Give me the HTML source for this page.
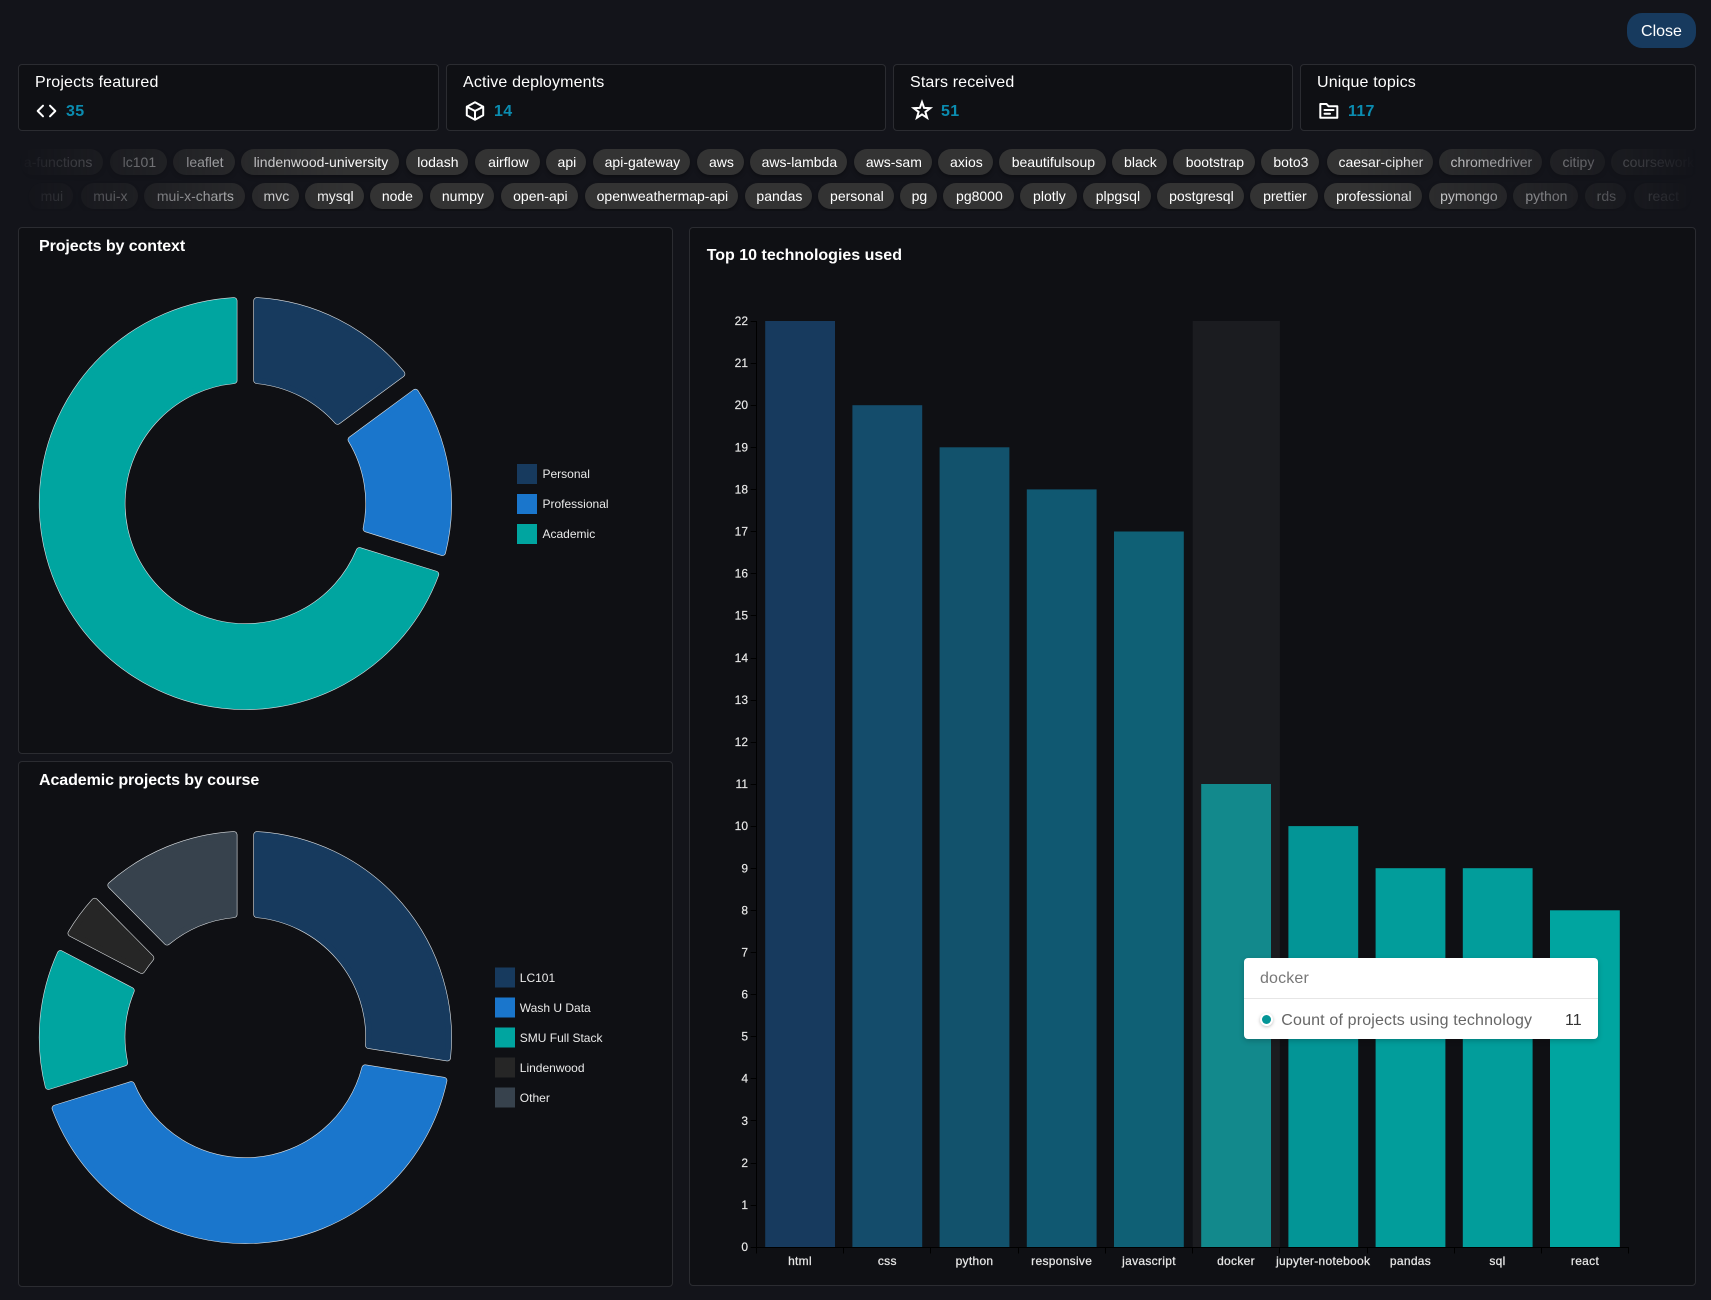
<!DOCTYPE html>
<html lang="en"><head><meta charset="utf-8"><title>Projects dashboard</title>
<style>
html,body{margin:0;padding:0;background:#13141a;}
body{width:1711px;height:1300px;position:relative;overflow:hidden;font-family:"Liberation Sans",sans-serif;color:#fff;}
.a{position:absolute;}
.card{position:absolute;box-sizing:border-box;background:#0f1014;border:1px solid #2b2c31;border-radius:4px;}
.t{position:absolute;font-size:16px;line-height:20px;color:#fff;white-space:nowrap;letter-spacing:.15px;}
.v{position:absolute;top:102px;font-size:16px;line-height:20px;font-weight:700;color:#0b8cb0;letter-spacing:.3px;}
.pt{position:absolute;font-size:16px;line-height:20px;font-weight:700;color:#fff;white-space:nowrap;}
#chips{position:absolute;left:0;top:149px;width:1711px;height:62px;overflow:hidden;
-webkit-mask-image:linear-gradient(to right,transparent 18px,#000 353px,#000 1358px,transparent 1696px);
mask-image:linear-gradient(to right,transparent 18px,#000 353px,#000 1358px,transparent 1696px);}
#chips span{position:absolute;height:26px;line-height:26px;border-radius:13px;background:#333;color:#fff;font-size:14px;text-align:center;white-space:nowrap;overflow:hidden;box-shadow:0 2px 4px rgba(0,0,0,.35);margin-left:.4px;padding-left:1px;}
.r1{top:0}.r2{top:34px}
svg text{font-family:"Liberation Sans",sans-serif;}
</style></head><body>

<div class="a" style="left:1627px;top:12.5px;width:69px;height:35.5px;background:#173a5e;border-radius:15px;text-align:center;line-height:37px;font-size:16px;color:#fff;">Close</div>

<div class="card" style="left:18px;top:64px;width:421px;height:67px;"></div>
<div class="card" style="left:446px;top:64px;width:440px;height:67px;"></div>
<div class="card" style="left:893px;top:64px;width:400px;height:67px;"></div>
<div class="card" style="left:1300px;top:64px;width:396px;height:67px;"></div>
<div class="t" style="left:35px;top:73px;">Projects featured</div>
<div class="t" style="left:463px;top:73px;">Active deployments</div>
<div class="t" style="left:910px;top:73px;">Stars received</div>
<div class="t" style="left:1317px;top:73px;">Unique topics</div>
<div class="v" style="left:66px;">35</div>
<div class="v" style="left:494px;">14</div>
<div class="v" style="left:941px;">51</div>
<div class="v" style="left:1348px;">117</div>

<div id="chips">
<span class="r1" style="left:20px;width:83px;text-align:right;padding-right:11px;box-sizing:border-box;">a-functions</span>
<span class="r1" style="left:110px;width:56px;">lc101</span>
<span class="r1" style="left:173px;width:61px;">leaflet</span>
<span class="r1" style="left:241px;width:157px;">lindenwood-university</span>
<span class="r1" style="left:406px;width:61px;">lodash</span>
<span class="r1" style="left:475px;width:64px;">airflow</span>
<span class="r1" style="left:546px;width:39px;">api</span>
<span class="r1" style="left:593px;width:96px;">api-gateway</span>
<span class="r1" style="left:697px;width:46px;">aws</span>
<span class="r1" style="left:750px;width:96px;">aws-lambda</span>
<span class="r1" style="left:854px;width:77px;">aws-sam</span>
<span class="r1" style="left:938px;width:54px;">axios</span>
<span class="r1" style="left:999px;width:106px;">beautifulsoup</span>
<span class="r1" style="left:1112px;width:54px;">black</span>
<span class="r1" style="left:1173px;width:81px;">bootstrap</span>
<span class="r1" style="left:1261px;width:57px;">boto3</span>
<span class="r1" style="left:1327px;width:105px;">caesar-cipher</span>
<span class="r1" style="left:1439px;width:102px;">chromedriver</span>
<span class="r1" style="left:1550px;width:54px;">citipy</span>
<span class="r1" style="left:1611px;width:92px;">coursework</span>
<span class="r2" style="left:29px;width:43px;">mui</span>
<span class="r2" style="left:81px;width:56px;">mui-x</span>
<span class="r2" style="left:144px;width:100px;">mui-x-charts</span>
<span class="r2" style="left:252px;width:46px;">mvc</span>
<span class="r2" style="left:305px;width:58px;">mysql</span>
<span class="r2" style="left:370px;width:52px;">node</span>
<span class="r2" style="left:430px;width:63px;">numpy</span>
<span class="r2" style="left:501px;width:76px;">open-api</span>
<span class="r2" style="left:585px;width:152px;">openweathermap-api</span>
<span class="r2" style="left:745px;width:66px;">pandas</span>
<span class="r2" style="left:818px;width:75px;">personal</span>
<span class="r2" style="left:900px;width:36px;">pg</span>
<span class="r2" style="left:943px;width:70px;">pg8000</span>
<span class="r2" style="left:1020px;width:56px;">plotly</span>
<span class="r2" style="left:1083px;width:67px;">plpgsql</span>
<span class="r2" style="left:1157px;width:86px;">postgresql</span>
<span class="r2" style="left:1250px;width:67px;">prettier</span>
<span class="r2" style="left:1324px;width:97px;">professional</span>
<span class="r2" style="left:1429px;width:77px;">pymongo</span>
<span class="r2" style="left:1513px;width:64px;">python</span>
<span class="r2" style="left:1585px;width:40px;">rds</span>
<span class="r2" style="left:1634px;width:56px;">react</span>
</div>

<div class="card" style="left:18px;top:227px;width:655px;height:527px;"></div>
<div class="card" style="left:18px;top:761px;width:655px;height:526px;"></div>
<div class="card" style="left:689px;top:227px;width:1007px;height:1059px;"></div>
<div class="pt" style="left:39px;top:237px;letter-spacing:-.08px;">Projects by context</div>
<div class="pt" style="left:39px;top:771px;letter-spacing:-.08px;">Academic projects by course</div>
<div class="pt" style="left:706.7px;top:246px;">Top 10 technologies used</div>

<svg class="a" style="left:0;top:0" width="1711" height="1300" viewBox="0 0 1711 1300" xmlns="http://www.w3.org/2000/svg">
<!-- stat icons -->
<g fill="none" stroke="#fff" stroke-width="2" stroke-linecap="round" stroke-linejoin="round">
<path d="M43 105.7L37.7 111L43 116.3M50 105.7L55.3 111L50 116.3"/>
<path d="M475 102.2L483.2 106.7V115.3L475 119.8L466.8 115.3V106.7ZM466.8 106.7L475 111L483.2 106.7M475 111V119.8"/>
<path d="M1320.3 104H1326.5L1328.5 106.2H1337.3V117.7H1320.3ZM1324.5 110H1333.5M1324.5 113.8H1330"/>
</g>
<path fill="none" stroke="#fff" stroke-width="2" stroke-linejoin="miter" d="M922 102.1L924.1 107.9L930.3 108.1L925.4 111.9L927.1 117.8L922 114.4L916.9 117.8L918.6 111.9L913.7 108.1L919.9 107.9Z"/>

<!-- donut 1 -->
<g transform="translate(245.4,503.4)" stroke-linejoin="round">
<path d="M11.5,-202.67A203,203 0 0 1 156.33,-129.5L92.16,-82.21A123.5,123.5 0 0 0 11.5,-122.96Z" fill="#dfe3e6" stroke="#dfe3e6" stroke-width="7"/><path d="M11.5,-202.67A203,203 0 0 1 156.33,-129.5L92.16,-82.21A123.5,123.5 0 0 0 11.5,-122.96Z" fill="#173a5e" stroke="#173a5e" stroke-width="5.8"/>
<path d="M169.95,-111.02A203,203 0 0 1 197.01,48.95L120.87,25.38A123.5,123.5 0 0 0 105.79,-63.71Z" fill="#dfe3e6" stroke="#dfe3e6" stroke-width="7"/><path d="M169.95,-111.02A203,203 0 0 1 197.01,48.95L120.87,25.38A123.5,123.5 0 0 0 105.79,-63.71Z" fill="#1a76cc" stroke="#1a76cc" stroke-width="5.8"/>
<path d="M190.21,70.91A203,203 0 1 1 -11.5,-202.67L-11.5,-122.96A123.5,123.5 0 1 0 114.07,47.35Z" fill="#dfe3e6" stroke="#dfe3e6" stroke-width="7"/><path d="M190.21,70.91A203,203 0 1 1 -11.5,-202.67L-11.5,-122.96A123.5,123.5 0 1 0 114.07,47.35Z" fill="#00a5a0" stroke="#00a5a0" stroke-width="5.8"/>
</g>
<rect x="517" y="464" width="20" height="20" fill="#173a5e"/>
<rect x="517" y="494" width="20" height="20" fill="#1a76cc"/>
<rect x="517" y="524" width="20" height="20" fill="#00a5a0"/>
<g font-size="12" fill="#eaeaea">
<text x="542.5" y="477.8">Personal</text>
<text x="542.5" y="507.8">Professional</text>
<text x="542.5" y="537.8">Academic</text>
</g>

<!-- donut 2 -->
<g transform="translate(245.4,1037.4)" stroke-linejoin="round">
<path d="M11.5,-202.67A203,203 0 0 1 201.98,20.35L123.25,7.88A123.5,123.5 0 0 0 11.5,-122.96Z" fill="#dfe3e6" stroke="#dfe3e6" stroke-width="7"/><path d="M11.5,-202.67A203,203 0 0 1 201.98,20.35L123.25,7.88A123.5,123.5 0 0 0 11.5,-122.96Z" fill="#173a5e" stroke="#173a5e" stroke-width="5.8"/>
<path d="M198.38,43.06A203,203 0 0 1 -190.2,70.93L-114.07,47.35A123.5,123.5 0 0 0 119.65,30.59Z" fill="#dfe3e6" stroke="#dfe3e6" stroke-width="7"/><path d="M198.38,43.06A203,203 0 0 1 -190.2,70.93L-114.07,47.35A123.5,123.5 0 0 0 119.65,30.59Z" fill="#1a76cc" stroke="#1a76cc" stroke-width="5.8"/>
<path d="M-197.01,48.94A203,203 0 0 1 -184.94,-83.71L-114.3,-46.78A123.5,123.5 0 0 0 -120.86,25.38Z" fill="#dfe3e6" stroke="#dfe3e6" stroke-width="7"/><path d="M-197.01,48.94A203,203 0 0 1 -184.94,-83.71L-114.3,-46.78A123.5,123.5 0 0 0 -120.86,25.38Z" fill="#00a5a0" stroke="#00a5a0" stroke-width="5.8"/>
<path d="M-174.28,-104.09A203,203 0 0 1 -150.68,-136.03L-94.67,-79.31A123.5,123.5 0 0 0 -103.65,-67.15Z" fill="#dfe3e6" stroke="#dfe3e6" stroke-width="7"/><path d="M-174.28,-104.09A203,203 0 0 1 -150.68,-136.03L-94.67,-79.31A123.5,123.5 0 0 0 -103.65,-67.15Z" fill="#262626" stroke="#262626" stroke-width="5.8"/>
<path d="M-134.4,-152.14A203,203 0 0 1 -11.5,-202.67L-11.5,-122.96A123.5,123.5 0 0 0 -78.33,-95.48Z" fill="#dfe3e6" stroke="#dfe3e6" stroke-width="7"/><path d="M-134.4,-152.14A203,203 0 0 1 -11.5,-202.67L-11.5,-122.96A123.5,123.5 0 0 0 -78.33,-95.48Z" fill="#37424d" stroke="#37424d" stroke-width="5.8"/>
</g>
<rect x="495" y="967.5" width="20" height="20" fill="#173a5e"/>
<rect x="495" y="997.5" width="20" height="20" fill="#1a76cc"/>
<rect x="495" y="1027.5" width="20" height="20" fill="#00a5a0"/>
<rect x="495" y="1057.5" width="20" height="20" fill="#262626"/>
<rect x="495" y="1087.5" width="20" height="20" fill="#37424d"/>
<g font-size="12" fill="#eaeaea">
<text x="519.8" y="982">LC101</text>
<text x="519.8" y="1012">Wash U Data</text>
<text x="519.8" y="1042">SMU Full Stack</text>
<text x="519.8" y="1072">Lindenwood</text>
<text x="519.8" y="1102">Other</text>
</g>

<!-- bar chart -->
<rect x="1192.7" y="321" width="87.2" height="926.3" fill="#1b1c20"/>
<rect x="765.2" y="321" width="69.8" height="926.3" fill="#173a5e"/>
<rect x="852.4" y="405.2" width="69.8" height="842.1" fill="#144c6b"/>
<rect x="939.6" y="447.3" width="69.8" height="800" fill="#12526c"/>
<rect x="1026.8" y="489.4" width="69.8" height="757.9" fill="#105871"/>
<rect x="1114" y="531.5" width="69.8" height="715.8" fill="#0f6075"/>
<rect x="1201.2" y="784" width="69.8" height="463.3" fill="#12898c"/>
<rect x="1288.4" y="826.1" width="69.8" height="421.2" fill="#039596"/>
<rect x="1375.6" y="868.2" width="69.8" height="379.1" fill="#029d9b"/>
<rect x="1462.8" y="868.2" width="69.8" height="379.1" fill="#029d9b"/>
<rect x="1550" y="910.3" width="69.8" height="337" fill="#00a5a0"/>
<path fill="none" stroke="#000" stroke-width="1" d="M756.5 321V1247.5H1629
M750.7 321.5H756.5M750.7 363.5H756.5M750.7 405.5H756.5M750.7 447.5H756.5M750.7 489.5H756.5M750.7 531.5H756.5M750.7 573.5H756.5M750.7 615.5H756.5M750.7 658.5H756.5M750.7 700.5H756.5M750.7 742.5H756.5M750.7 784.5H756.5M750.7 826.5H756.5M750.7 868.5H756.5M750.7 910.5H756.5M750.7 952.5H756.5M750.7 994.5H756.5M750.7 1036.5H756.5M750.7 1078.5H756.5M750.7 1120.5H756.5M750.7 1163.5H756.5M750.7 1205.5H756.5M750.7 1247.5H756.5
M756.5 1247.5V1253.5M843.5 1247.5V1253.5M930.5 1247.5V1253.5M1018.5 1247.5V1253.5M1105.5 1247.5V1253.5M1192.5 1247.5V1253.5M1279.5 1247.5V1253.5M1367.5 1247.5V1253.5M1454.5 1247.5V1253.5M1541.5 1247.5V1253.5M1628.5 1247.5V1253.5"/>
<g font-size="12" fill="#eaeaea" text-anchor="end" stroke="#eaeaea" stroke-width=".15">
<text x="748" y="325">22</text><text x="748" y="367.2">21</text><text x="748" y="409.2">20</text><text x="748" y="451.4">19</text><text x="748" y="493.5">18</text><text x="748" y="535.6">17</text><text x="748" y="577.7">16</text><text x="748" y="619.7">15</text><text x="748" y="661.8">14</text><text x="748" y="703.9">13</text><text x="748" y="746">12</text><text x="748" y="788.1">11</text><text x="748" y="830.2">10</text><text x="748" y="872.3">9</text><text x="748" y="914.4">8</text><text x="748" y="956.5">7</text><text x="748" y="998.6">6</text><text x="748" y="1040.7">5</text><text x="748" y="1082.7">4</text><text x="748" y="1124.8">3</text><text x="748" y="1166.9">2</text><text x="748" y="1209">1</text><text x="748" y="1251.1">0</text>
</g>
<g font-size="12" fill="#e6e6e6" stroke="#e6e6e6" stroke-width=".25" text-anchor="middle" letter-spacing=".3">
<text x="800" y="1265">html</text><text x="887.3" y="1265">css</text><text x="974.5" y="1265">python</text><text x="1061.7" y="1265">responsive</text><text x="1149" y="1265">javascript</text><text x="1236" y="1265">docker</text><text x="1323.2" y="1265">jupyter-notebook</text><text x="1410.5" y="1265">pandas</text><text x="1497.5" y="1265">sql</text><text x="1585" y="1265">react</text>
</g>
</svg>

<!-- tooltip -->
<div class="a" style="left:1244px;top:958px;width:354px;height:81px;background:#fff;border-radius:4px;box-shadow:0 2px 6px rgba(0,0,0,.2);">
<div class="a" style="left:0;top:40px;width:354px;height:1px;background:#e6e6e6;"></div>
<div class="a" style="left:16px;top:11px;font-size:16px;line-height:20px;color:#777;letter-spacing:.15px;">docker</div>
<div class="a" style="left:17.5px;top:56.5px;width:9px;height:9px;border-radius:50%;background:#039596;box-shadow:0 0 0 2px #fff,0 1px 3px 2px rgba(0,0,0,.25);"></div>
<div class="a" style="left:37.3px;top:52.5px;font-size:16px;line-height:20px;color:#666;white-space:nowrap;letter-spacing:.16px;">Count of projects using technology</div>
<div class="a" style="left:321px;top:52.5px;font-size:16px;line-height:20px;color:#333;">11</div>
</div>

</body></html>
